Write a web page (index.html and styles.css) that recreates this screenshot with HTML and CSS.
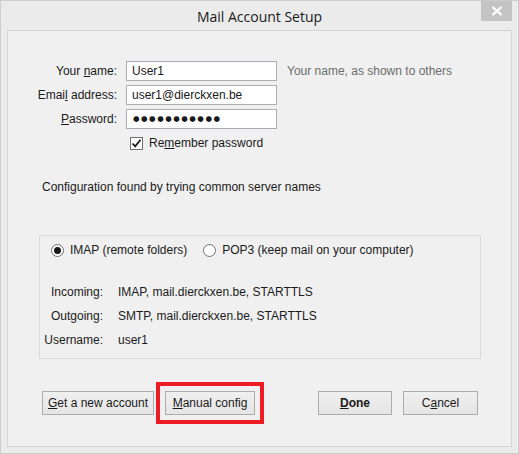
FILE: index.html
```html
<!DOCTYPE html>
<html lang="en">
<head>
<meta charset="utf-8">
<title>Mail Account Setup</title>
<link rel="stylesheet" href="styles.css">
</head>
<body>
<div class="window">
  <div class="titlebar">
    <span class="title">Mail Account Setup</span>
    <span class="close" aria-label="Close">
      <svg width="12" height="10" viewBox="0 0 12 10"><path d="M1.5 1 L10.5 9 M10.5 1 L1.5 9" stroke="#fff" stroke-width="2.2" fill="none"/></svg>
    </span>
  </div>
  <div class="client">
    <div class="form">
      <label class="lbl">Your <u>n</u>ame:</label>
      <div class="input">User1</div>
      <span class="hint">Your name, as shown to others</span>
      <label class="lbl">Emai<u>l</u> address:</label>
      <div class="input">user1@dierckxen.be</div>
      <span></span>
      <label class="lbl"><u>P</u>assword:</label>
      <div class="input pw">●●●●●●●●●●●</div>
      <span></span>
      <span></span>
      <div class="remember">
        <span class="checkbox"><svg width="11" height="11" viewBox="0 0 11 11"><path d="M1.5 5.5 L4.2 8.3 L9.5 1.8" stroke="#1a1a1a" stroke-width="1.8" fill="none"/></svg></span>
        <span>Re<u>m</u>ember password</span>
      </div>
    </div>
    <p class="found">Configuration found by trying common server names</p>
    <div class="group">
      <div class="radios">
        <span class="radio checked"></span><span class="rlabel">IMAP (remote folders)</span>
        <span class="radio second"></span><span class="rlabel">POP3 (keep mail on your computer)</span>
      </div>
      <div class="details">
        <span class="dl">Incoming:</span><span>IMAP, mail.dierckxen.be, STARTTLS</span>
        <span class="dl">Outgoing:</span><span>SMTP, mail.dierckxen.be, STARTTLS</span>
        <span class="dl">Username:</span><span>user1</span>
      </div>
    </div>
    <div class="buttons">
      <button class="btn get"><u>G</u>et a new account</button>
      <button class="btn manual"><u>M</u>anual config</button>
      <button class="btn done"><u>D</u>one</button>
      <button class="btn cancel">C<u>a</u>ncel</button>
    </div>
  </div>
</div>
</body>
</html>
```
FILE: styles.css
```css
html, body {
  margin: 0;
  padding: 0;
}
body {
  width: 519px;
  height: 454px;
  font-family: "Liberation Sans", Arial, sans-serif;
  font-size: 12px;
  color: #1a1a1a;
}
.window {
  box-sizing: border-box;
  width: 519px;
  height: 454px;
  border: 1px solid #cdcdcd;
  background: #ebebeb;
  display: flex;
  flex-direction: column;
  position: relative;
}
.titlebar {
  height: 29px;
  display: flex;
  align-items: center;
  justify-content: center;
}
.title {
  font-family: "Open Sans", "Noto Sans", sans-serif;
  font-size: 14px;
  color: #1a1a1a;
  margin-top: 2px;
}
.close {
  position: absolute;
  top: 0;
  right: 6px;
  width: 31px;
  height: 20px;
  background: #c4c4c4;
  display: flex;
  align-items: center;
  justify-content: center;
}
.client {
  margin: 0 6px 6px 6px;
  flex: 1;
  border: 1px solid #d5d5d5;
  background: #f0f0f0;
}
.form {
  display: grid;
  grid-template-columns: 109px 151px auto;
  grid-auto-rows: 20px;
  column-gap: 9px;
  row-gap: 4px;
  margin-top: 30px;
  align-items: center;
}
.lbl {
  text-align: right;
}
.input {
  box-sizing: border-box;
  height: 20px;
  border: 1px solid #abadb3;
  background: #fff;
  padding: 0 5px;
  line-height: 18px;
  white-space: nowrap;
}
.pw {
  font-family: "DejaVu Sans", sans-serif;
  font-size: 7.5px;
  letter-spacing: 1.5px;
  padding-left: 6px;
}
.hint {
  color: #6d6d6d;
  margin-left: 1px;
}
.remember {
  grid-column: 2 / 4;
  display: flex;
  align-items: center;
  gap: 6px;
  padding-left: 4px;
}
.checkbox {
  box-sizing: border-box;
  width: 13px;
  height: 13px;
  border: 1px solid #707070;
  background: #fff;
  display: flex;
  align-items: center;
  justify-content: center;
}
.found {
  margin: 26px 0 0 34px;
  line-height: 16px;
}
.group {
  box-sizing: border-box;
  width: 442px;
  height: 124px;
  margin: 40px 0 0 31px;
  border: 1px solid #dadada;
}
.radios {
  display: flex;
  align-items: center;
  height: 16px;
  margin-top: 6px;
  padding-left: 11px;
}
.radio {
  box-sizing: border-box;
  width: 13px;
  height: 13px;
  border: 1px solid #707070;
  border-radius: 50%;
  background: #fff;
  display: inline-flex;
  align-items: center;
  justify-content: center;
  margin-right: 6px;
}
.radio.checked::after {
  content: "";
  width: 7px;
  height: 7px;
  border-radius: 50%;
  background: #1a1a1a;
}
.radio.second {
  margin-left: 16px;
}
.details {
  display: grid;
  grid-template-columns: 63px auto;
  column-gap: 15px;
  grid-auto-rows: 16px;
  row-gap: 8px;
  margin-top: 26px;
  align-items: center;
}
.dl {
  text-align: right;
}
.buttons {
  display: flex;
  margin-top: 32px;
  padding: 0 33px 0 34px;
  gap: 11px;
}
.btn {
  box-sizing: border-box;
  height: 24px;
  border: 1px solid #acacac;
  background: linear-gradient(#f0f0f0, #e5e5e5);
  font-family: inherit;
  font-size: 12px;
  color: #1a1a1a;
  padding: 0;
}
.get { width: 112px; }
.manual {
  width: 90px;
  outline: 4px solid #ed1c24;
  outline-offset: 5px;
}
.done {
  width: 74px;
  margin-left: auto;
  font-weight: bold;
}
.cancel { width: 75px; }
```
